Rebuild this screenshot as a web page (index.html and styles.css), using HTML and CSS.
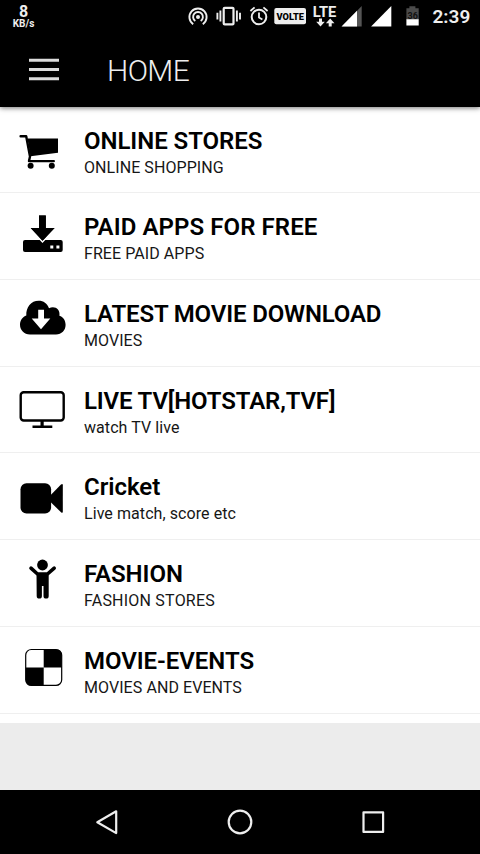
FILE: index.html
```html
<!DOCTYPE html>
<html lang="en">
<head>
<meta charset="utf-8">
<title>Home</title>
<link rel="stylesheet" href="styles.css">
</head>
<body>
<div class="screen">
  <header class="top">
    <div class="status">
      <div class="speed"><b>8</b><span>KB/s</span></div>
      <svg class="status-icons" width="245" height="34" viewBox="180 0 245 34" fill="none" stroke="#eee">
        <g stroke-width="1.9">
          <path d="M193.2 24.2a8.6 8.6 0 1 1 9.6 0"/>
          <path d="M195.3 21a4.9 4.9 0 1 1 5.4 0"/>
        </g>
        <circle cx="198" cy="17" r="2" fill="#eee" stroke="none"/>
        <rect x="223.7" y="7.8" width="9.8" height="16.6" rx="1" stroke-width="2.2"/>
        <path d="M220.4 10.5v11M217.4 12.8v6.6M236.9 10.5v11M240 12.8v6.6" stroke-width="1.9"/>
        <circle cx="259" cy="17" r="7.3" stroke-width="2"/>
        <path d="M259 12.5v5l3.4 2M250.4 11l4.2-3.6M267.6 11l-4.2-3.6" stroke-width="1.8"/>
        <rect x="274.3" y="8" width="31.7" height="16.2" rx="2" fill="#eee" stroke="none"/>
        <text class="volte" x="276.5" y="19.7" textLength="27.5" lengthAdjust="spacingAndGlyphs">VOLTE</text>
        <text class="lte" x="312.7" y="17" textLength="23.6" lengthAdjust="spacingAndGlyphs">LTE</text>
        <path d="M319 18.5h3v3.3h2.8l-4.3 4.7-4.3-4.7h2.8zM328.7 26.5h3v-3.3h2.8l-4.3-4.7-4.3 4.7h2.8z" fill="#eee" stroke="none"/>
        <path d="M361.700 6v20.400H342z" fill="#555" stroke="none"/>
        <path d="M357 10.800v15.600h-15.500z" fill="#fff" stroke="none"/>
        <path d="M391.300 6v20.400h-20.200z" fill="#fff" stroke="none"/>
        <path d="M406.400 8.200h3V6.300h6v1.900h3.300V20h-12.300z" fill="#4b4b4b" stroke="none"/>
        <path d="M406.400 19.300h12.300v6.200h-12.300z" fill="#fff" stroke="none"/>
        <text class="charge" x="407.500" y="19">36</text>
      </svg>
      <time class="clock">2:39</time>
    </div>
    <div class="bar">
      <svg width="30" height="24" viewBox="0 0 30 24"><path d="M0 2.200h30M0 11.500h30M0 20.800h30" stroke="#ddd" stroke-width="3"/></svg>
      <h1>HOME</h1>
    </div>
  </header>
  <main class="list">
    <article class="row">
      <svg class="icon" viewBox="0 0 84 86.7">
        <path d="M27.500 31.500H58v14.300L30.500 49.200z"/>
        <path d="M20.600 29.300h5.600L30 49.500l-1 4.600h24.800" fill="none" stroke="#000" stroke-width="2.400" stroke-linecap="round" stroke-linejoin="round"/>
        <circle cx="30.600" cy="58.800" r="3"/><circle cx="51.800" cy="58.800" r="3"/>
      </svg>
      <div><h2>ONLINE STORES</h2><p>ONLINE SHOPPING</p></div>
    </article>
    <article class="row">
      <svg class="icon" viewBox="0 0 84 86.7">
        <rect x="23" y="47" width="39.700" height="12" rx="2"/>
        <path d="M39 22.500h6.800V35h8.800L42.500 47.800 30.700 35H39z" stroke="#fff" stroke-width="3" paint-order="stroke"/>
        <path d="M39 22.500h6.800V35h8.800L42.500 47.800 30.700 35H39z"/>
        <path d="M50.300 52.600h3v3h-3zM56.400 52.600h3v3h-3z" fill="#fff"/>
      </svg>
      <div><h2 class="wide">PAID APPS FOR FREE</h2><p>FREE PAID APPS</p></div>
    </article>
    <article class="row">
      <svg class="icon" viewBox="0 0 84 86.7">
        <path d="M30 54.500C24 54.500 20 50 20 44.800c0-4.800 3-8 6.300-9.200C26 27 31 20.700 38.700 20.700c4.800 0 8.500 2.600 10.300 7.500 5.300-3 11.600.7 10.400 7.600 3.800 1.300 6.200 4.600 6.200 9 0 5.600-4 9.700-9.600 9.700z"/>
        <path d="M38.200 29.700h5.800v8.900h6.300L41 49.200 31.700 38.600h6.500z" fill="#fff"/>
      </svg>
      <div><h2 class="tight">LATEST MOVIE DOWNLOAD</h2><p>MOVIES</p></div>
    </article>
    <article class="row">
      <svg class="icon" viewBox="0 0 84 86.7">
        <rect x="20.700" y="25.300" width="43" height="28.200" rx="3" fill="none" stroke="#000" stroke-width="2.400"/>
        <path d="M40.500 54h3.200v5h-3.200zM32.500 58.500h19.800v2.600H32.500z"/>
      </svg>
      <div><h2 class="tight">LIVE TV[HOTSTAR,TVF]</h2><p>watch TV live</p></div>
    </article>
    <article class="row">
      <svg class="icon" viewBox="0 0 84 86.7">
        <rect x="20.500" y="30.300" width="30.600" height="30.200" rx="6"/>
        <path d="M50 42.700 61 31.500q1.800-1.500 1.800.7v26.500q0 2-1.800.5L50 48.500z"/>
      </svg>
      <div><h2>Cricket</h2><p>Live match, score etc</p></div>
    </article>
    <article class="row">
      <svg class="icon" viewBox="0 0 84 86.7">
        <circle cx="42.500" cy="25" r="5.400"/>
        <path d="M31 28.200 37.500 34h10L54.200 28.200" fill="none" stroke="#000" stroke-width="3.600" stroke-linecap="round" stroke-linejoin="round"/>
        <path d="M36.500 33h12.200v23a2.400 2.400 0 0 1-5.200 0V46h-1.600v10a2.500 2.500 0 0 1-5.200 0z"/>
      </svg>
      <div><h2>FASHION</h2><p class="wide">FASHION STORES</p></div>
    </article>
    <article class="row">
      <svg class="icon" viewBox="0 0 84 86.7">
        <path d="M43.700 22.500H56q5.700 0 5.700 5.700v12.200h-18zM25.700 40.400h18v18H31.400q-5.700 0-5.700-5.700z"/>
        <rect x="25.700" y="22.500" width="36" height="35.900" rx="5.700" fill="none" stroke="#000" stroke-width="1.200"/>
      </svg>
      <div><h2>MOVIE-EVENTS</h2><p>MOVIES AND EVENTS</p></div>
    </article>
  </main>
  <nav class="nav">
    <svg width="480" height="64" viewBox="0 0 480 64" fill="none" stroke="#eee" stroke-width="2.200" stroke-linejoin="round">
      <path d="M97.300 32.200 116.200 21.300v21.800z"/><circle cx="240" cy="32" r="11.300"/><rect x="363.500" y="22.300" width="19.600" height="19.600"/>
    </svg>
  </nav>
</div>
</body>
</html>
```

FILE: styles.css
```css
* { box-sizing: border-box; }
body { margin: 0; background: #ececec; font-family: Roboto, "Liberation Sans", sans-serif; }
.screen { width: 480px; height: 854px; display: flex; flex-direction: column; overflow: hidden; }
.top { height: 106.5px; flex: none; background: #000; color: #eee; box-shadow: 0 1px 5px rgba(0,0,0,.55); z-index: 1; }
.status { height: 34px; display: flex; }
.speed { width: 47px; margin-right: 133px; display: flex; flex-direction: column; align-items: center; padding-top: 2px; }
.speed b { font-size: 16px; line-height: 19px; height: 17px; font-weight: 700; }
.speed span { font-size: 10px; line-height: 10px; font-weight: 700; }
.status-icons { flex: none; }
.volte { font: 900 9.5px Roboto, sans-serif; fill: #000; stroke: none; }
.lte { font: 700 14px Roboto, sans-serif; fill: #eee; stroke: none; }
.charge { font: 700 9px Roboto, sans-serif; fill: #111; stroke: none; }
.clock { margin-left: 7.5px; font-size: 19px; line-height: 34px; font-weight: 600; white-space: nowrap; }
.bar { display: flex; align-items: center; height: 71px; padding-left: 29px; gap: 48px; }
h1 { margin: 3px 0 0; font-size: 30px; font-weight: 300; line-height: 36px; letter-spacing: -.6px; }
.list { flex: none; height: 616.5px; background: #fff; color: #000; }
.row { height: 86.72px; display: flex; border-bottom: 1px solid #efefef; }
.icon { width: 84px; height: 86.7px; flex: none; }
h2 { margin: 20px 0 0; font-size: 24px; line-height: 28px; font-weight: 600; letter-spacing: -.05px; white-space: nowrap; }
h2.wide { letter-spacing: .08px; }
h2.tight { letter-spacing: -.15px; }
p { margin: 3px 0 0; font-size: 16px; line-height: 20px; letter-spacing: .07px; color: #161616; white-space: nowrap; }
p.wide { letter-spacing: .22px; }
.nav { height: 64px; margin-top: auto; background: #000; }
.nav svg { display: block; }
```
